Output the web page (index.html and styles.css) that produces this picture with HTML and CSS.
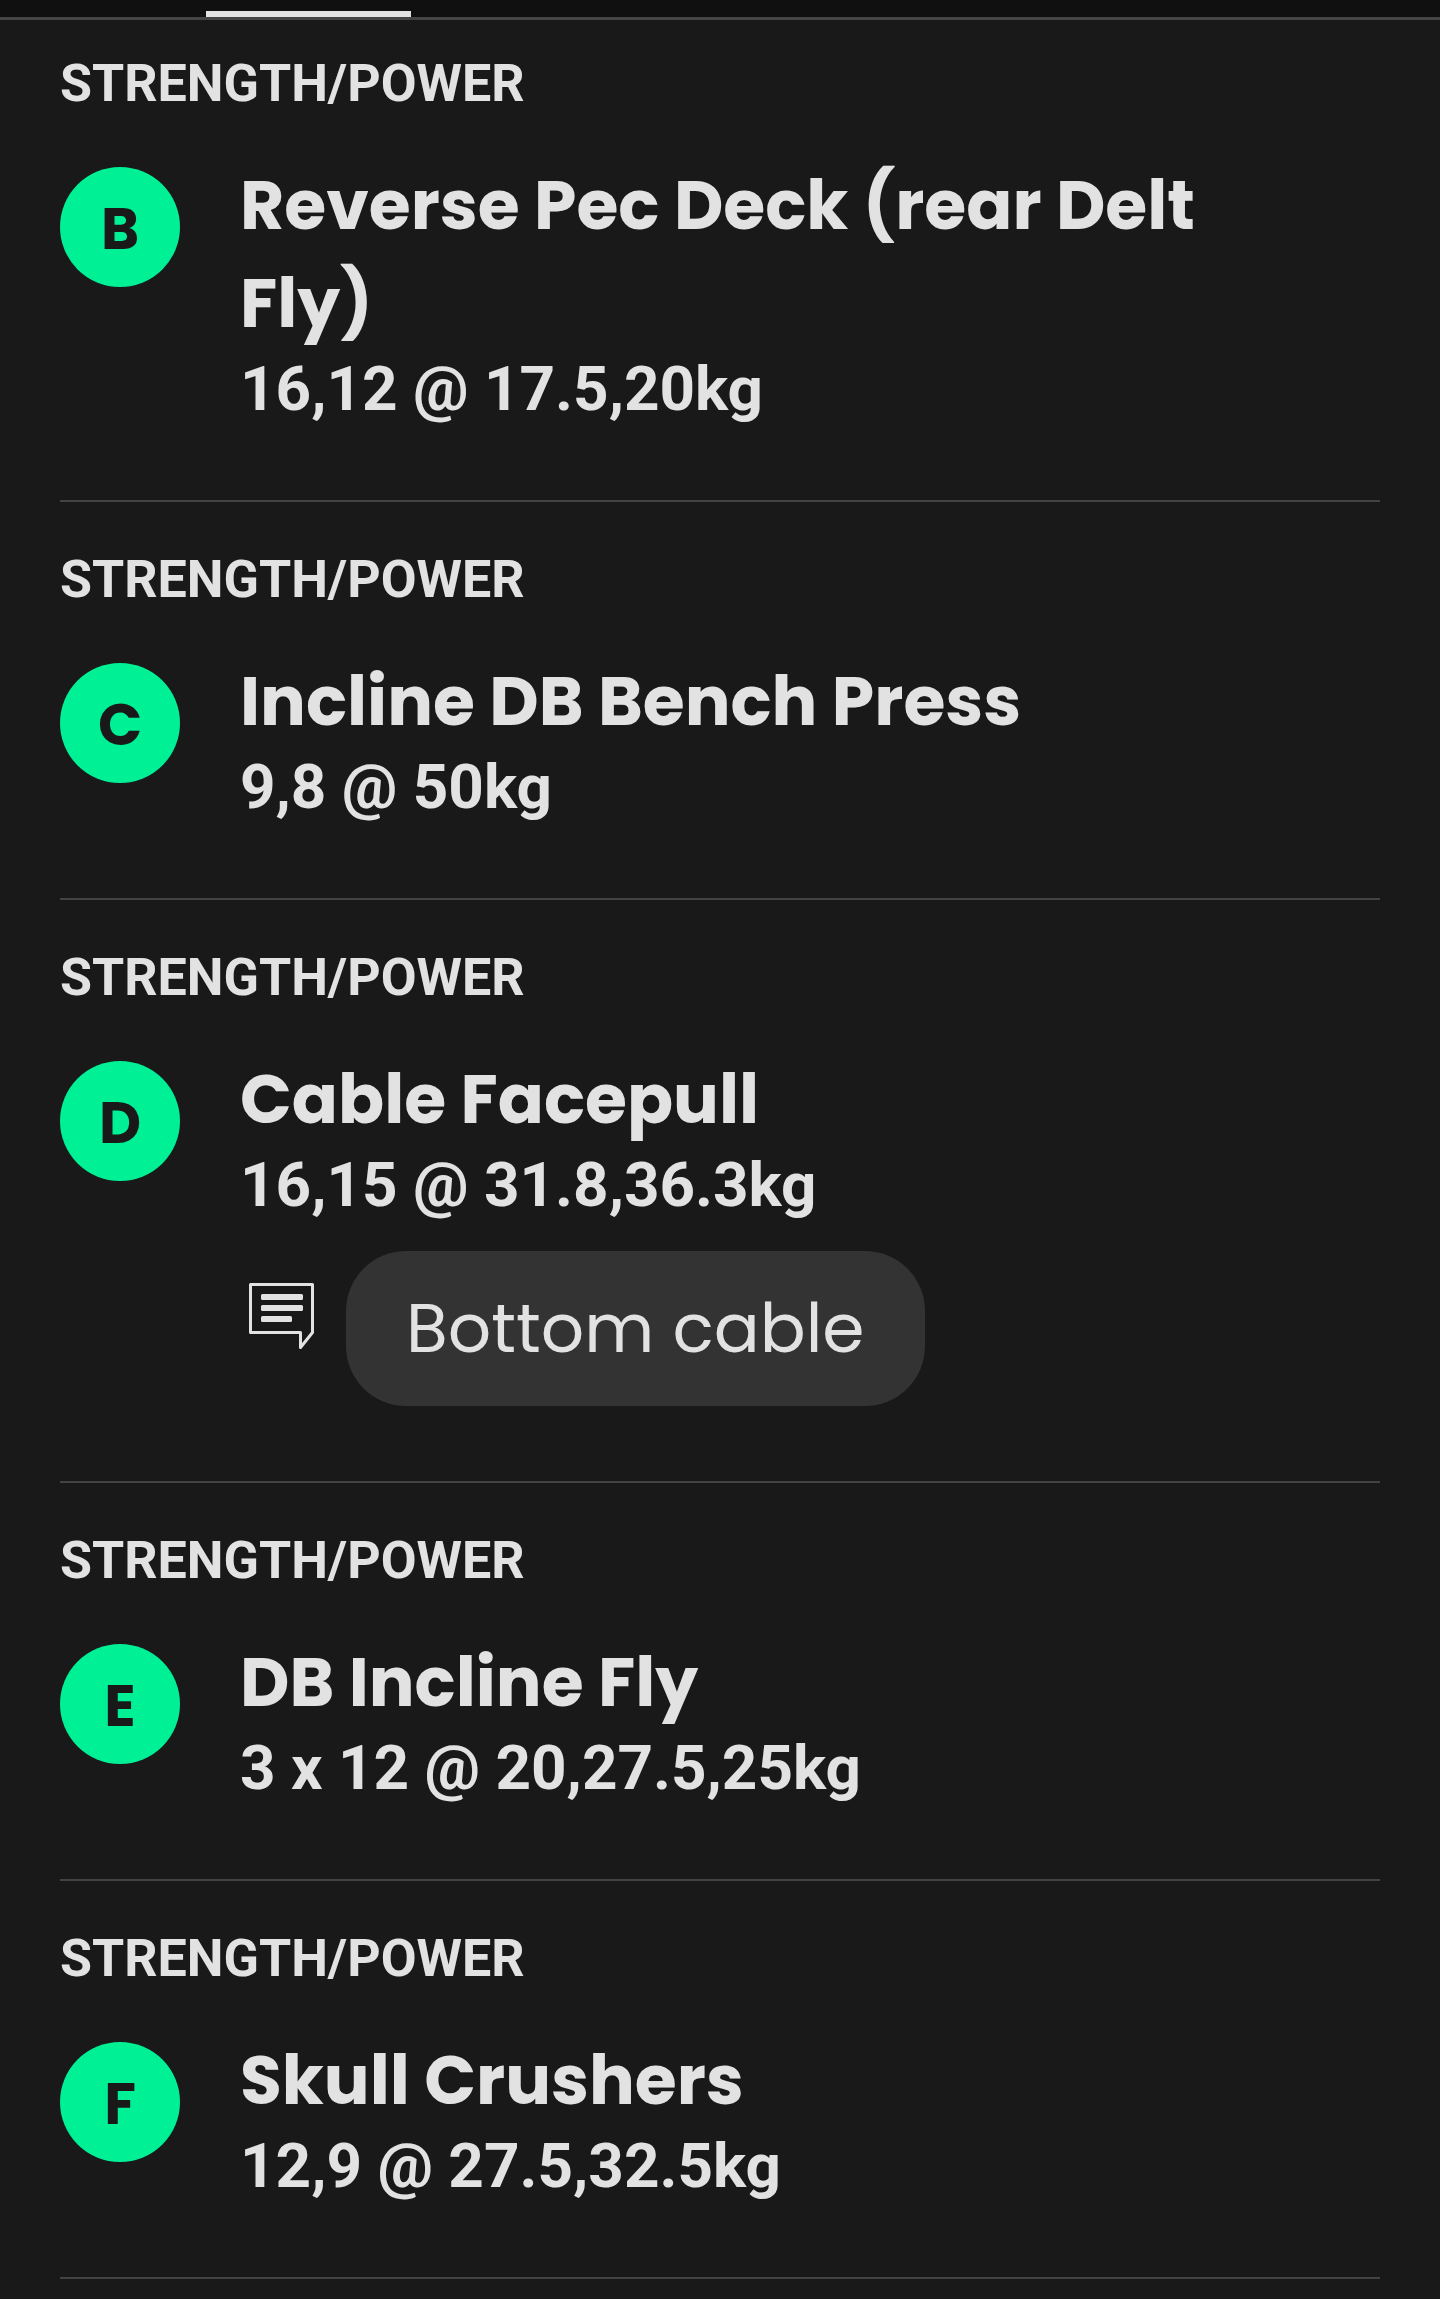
FILE: index.html
```html
<!DOCTYPE html>
<html lang="en">
<head>
  <meta charset="UTF-8">
  <meta name="viewport" content="width=device-width, initial-scale=1.0">
  <title>Workout</title>
  <link rel="stylesheet" href="styles.css">
</head>
<body>

  <div class="tab-bar">
    <div class="tab-indicator"></div>
  </div>

  <main class="workout">
    <section class="exercise">
      <p class="category">STRENGTH/POWER</p>
      <div class="row">
        <span class="badge">B</span>
        <div class="details">
          <h2>Reverse Pec Deck (rear Delt Fly)</h2>
          <p class="sets">16,12 @ 17.5,20kg</p>
        </div>
      </div>
    </section>

    <section class="exercise">
      <p class="category">STRENGTH/POWER</p>
      <div class="row">
        <span class="badge">C</span>
        <div class="details">
          <h2>Incline DB Bench Press</h2>
          <p class="sets">9,8 @ 50kg</p>
        </div>
      </div>
    </section>

    <section class="exercise">
      <p class="category">STRENGTH/POWER</p>
      <div class="row">
        <span class="badge">D</span>
        <div class="details">
          <h2>Cable Facepull</h2>
          <p class="sets">16,15 @ 31.8,36.3kg</p>
          <div class="note">
            <svg class="note-icon" viewBox="0 0 66 68" aria-hidden="true">
              <path class="outline" d="M1.5 1.5H63.5V49.5L51.5 64.5V49.5H1.5Z"/>
              <rect x="12" y="11" width="42" height="6" rx="1.5"/>
              <rect x="12" y="22" width="42" height="6" rx="1.5"/>
              <rect x="12" y="33" width="31" height="6" rx="1.5"/>
            </svg>
            <p class="note-text">Bottom cable</p>
          </div>
        </div>
      </div>
    </section>

    <section class="exercise">
      <p class="category">STRENGTH/POWER</p>
      <div class="row">
        <span class="badge">E</span>
        <div class="details">
          <h2>DB Incline Fly</h2>
          <p class="sets">3 x 12 @ 20,27.5,25kg</p>
        </div>
      </div>
    </section>

    <section class="exercise">
      <p class="category">STRENGTH/POWER</p>
      <div class="row">
        <span class="badge">F</span>
        <div class="details">
          <h2>Skull Crushers</h2>
          <p class="sets">12,9 @ 27.5,32.5kg</p>
        </div>
      </div>
    </section>
  </main>

</body>
</html>
```
FILE: styles.css
```css
* {
  box-sizing: border-box;
}

body {
  margin: 0;
  background-color: #191919;
  color: #e2e2e2;
  font-family: Roboto, Arial, sans-serif;
}

h2,
p {
  margin: 0;
}

.tab-bar {
  display: grid;
  grid-template-columns: repeat(7, 1fr);
  padding-top: 11px;
  background-color: #101010;
  border-bottom: 3px solid #454545;
}

.tab-indicator {
  grid-column: 2;
  height: 6px;
  background-color: #e2e2e2;
}

.workout {
  padding: 0 60px;
}

.exercise {
  padding: 48px 0 75px;
  border-bottom: 2px solid #434343;
}

.exercise:first-child {
  padding-top: 34px;
}

.category {
  margin-bottom: 43px;
  font-size: 52px;
  line-height: 60px;
  font-weight: 700;
}

.row {
  display: flex;
  align-items: flex-start;
  gap: 60px;
}

.badge {
  flex: none;
  display: flex;
  justify-content: center;
  align-items: center;
  width: 120px;
  height: 120px;
  margin-top: 10px;
  padding-top: 2px;
  border-radius: 50%;
  background-color: #00f096;
  color: #191919;
  font-family: Poppins, Inter, sans-serif;
  font-size: 58px;
  font-weight: 700;
}

.details {
  flex: 1;
  padding-right: 120px;
}

h2 {
  font-family: Poppins, Inter, sans-serif;
  font-size: 68px;
  line-height: 98px;
  font-weight: 700;
}

.sets {
  font-size: 62px;
  line-height: 72px;
  font-weight: 700;
}

.note {
  display: flex;
  align-items: flex-start;
  gap: 31px;
  margin-top: 30px;
  padding-left: 9px;
}

.note-icon {
  flex: none;
  width: 66px;
  height: 68px;
  margin-top: 32px;
  fill: #e2e2e2;
}

.note-icon .outline {
  fill: none;
  stroke: #e2e2e2;
  stroke-width: 3;
  stroke-linejoin: round;
}

.note-text {
  padding: 29px 60px 28px;
  border-radius: 60px;
  background-color: #333333;
  font-family: Poppins, Inter, sans-serif;
  font-size: 68px;
  line-height: 98px;
}
```
